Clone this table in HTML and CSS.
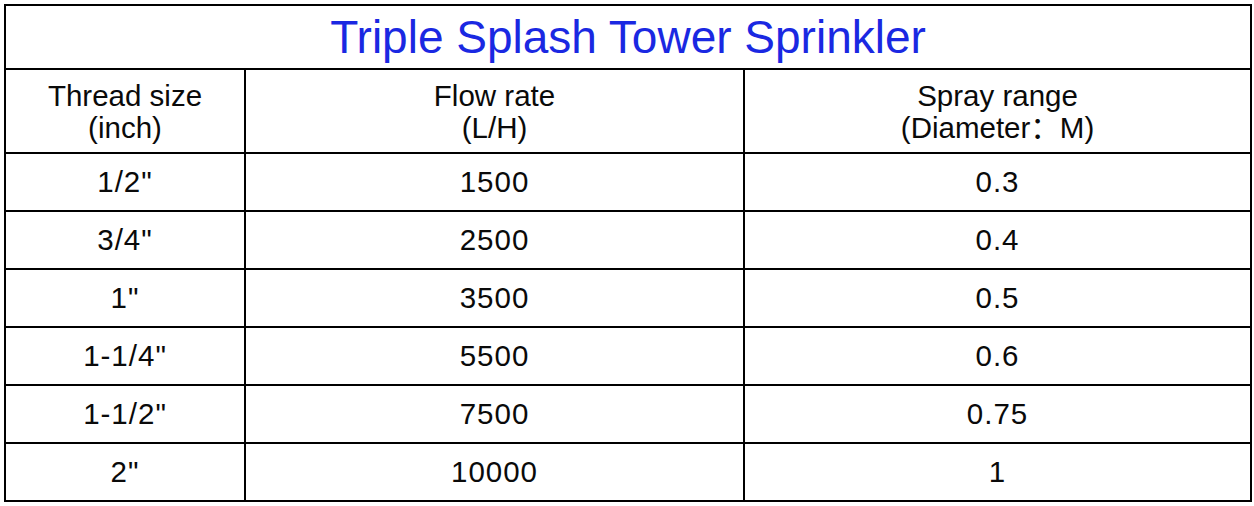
FILE: index.html
```html
<!DOCTYPE html>
<html lang="en">
<head>
<meta charset="utf-8">
<title>Triple Splash Tower Sprinkler</title>
<link rel="stylesheet" href="styles.css">
</head>
<body>
<div class="page">
  <table class="spec">
    <colgroup>
      <col class="c1">
      <col class="c2">
      <col class="c3">
    </colgroup>
    <thead>
      <tr class="title-row"><th colspan="3" class="title">Triple Splash Tower Sprinkler</th></tr>
      <tr class="head-row">
        <th>Thread size<br>(inch)</th>
        <th>Flow rate<br>(L/H)</th>
        <th>Spray range<br>(Diameter：M)</th>
      </tr>
    </thead>
    <tbody>
      <tr><td>1/2"</td><td>1500</td><td>0.3</td></tr>
      <tr><td>3/4"</td><td>2500</td><td>0.4</td></tr>
      <tr><td>1"</td><td>3500</td><td>0.5</td></tr>
      <tr><td>1-1/4"</td><td>5500</td><td>0.6</td></tr>
      <tr><td>1-1/2"</td><td>7500</td><td>0.75</td></tr>
      <tr><td>2"</td><td>10000</td><td>1</td></tr>
    </tbody>
  </table>
</div>
</body>
</html>
```

FILE: styles.css
```css
html, body {
  margin: 0;
  padding: 0;
  background: #ffffff;
}

.page {
  padding: 4px;
}

.spec {
  width: 1246px;
  border-collapse: collapse;
  table-layout: fixed;
  font-family: "Liberation Sans", Arial, "Noto Sans CJK SC", sans-serif;
  color: #0a0a0a;
}

.c1 { width: 240px; }
.c2 { width: 499px; }
.c3 { width: 507px; }

.spec th,
.spec td {
  border: 2px solid #000000;
  text-align: center;
  vertical-align: middle;
  padding: 0;
  font-weight: normal;
}

.title-row th {
  height: 62px;
}

.title {
  font-size: 46px;
  color: #1a28e2;
  line-height: 1;
  padding-bottom: 2px;
}

.head-row th {
  height: 80px;
  font-size: 29.5px;
  line-height: 32px;
  padding-top: 2px;
}

.spec td {
  height: 56px;
  font-size: 29.5px;
  line-height: 1;
  letter-spacing: 1px;
}
```
